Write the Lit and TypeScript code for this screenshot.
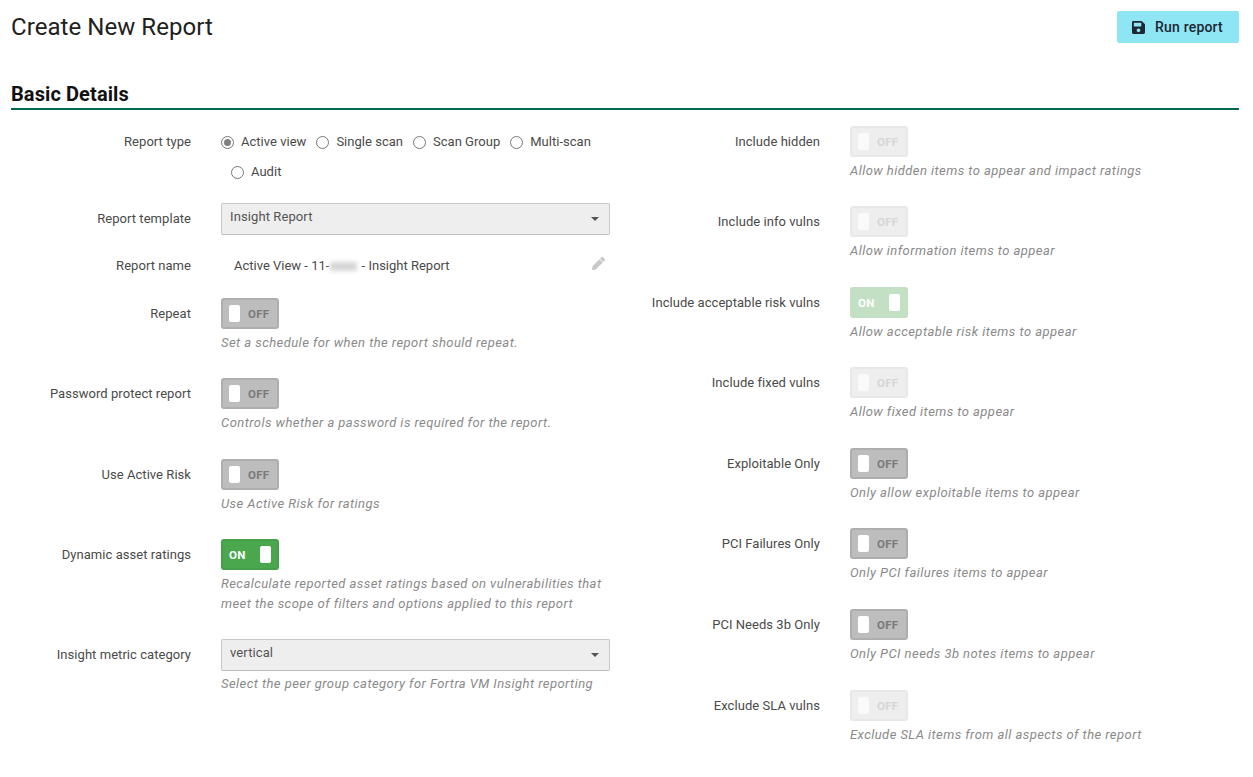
import { LitElement, html, css } from "lit";
import { customElement } from "lit/decorators.js";

type Row = { label: string; on?: boolean; disabled?: boolean; hint: string };

const SAVE = "M433.941 129.941l-83.882-83.882A48 48 0 0 0 316.118 32H48C21.49 32 0 53.49 0 80v352c0 26.51 21.49 48 48 48h352c26.51 0 48-21.49 48-48V163.882a48 48 0 0 0-14.059-33.941zM224 416c-35.346 0-64-28.654-64-64 0-35.346 28.654-64 64-64s64 28.654 64 64c0 35.346-28.654 64-64 64zm96-304.52V212c0 6.627-5.373 12-12 12H76c-6.627 0-12-5.373-12-12V108c0-6.627 5.373-12 12-12h228.52c3.183 0 6.235 1.264 8.485 3.515l3.48 3.48A11.996 11.996 0 0 1 320 111.48z";
const PENCIL = "M497.9 142.1l-46.1 46.1c-4.7 4.7-12.3 4.7-17 0l-111-111c-4.7-4.7-4.7-12.3 0-17l46.1-46.1c18.7-18.7 49.1-18.7 67.9 0l60.1 60.1c18.8 18.7 18.8 49.1 0 67.9zM284.2 99.8L21.6 362.4.4 483.9c-2.9 16.4 11.4 30.6 27.8 27.8l121.5-21.3 262.6-262.6c4.7-4.7 4.7-12.3 0-17l-111-111c-4.8-4.7-12.4-4.7-17.1 0z";

const LEFT: Row[] = [
  { label: "Repeat", hint: "Set a schedule for when the report should repeat." },
  { label: "Password protect report", hint: "Controls whether a password is required for the report." },
  { label: "Use Active Risk", hint: "Use Active Risk for ratings" },
  { label: "Dynamic asset ratings", on: true, hint: "Recalculate reported asset ratings based on vulnerabilities that meet the scope of filters and options applied to this report" },
];
const RIGHT: Row[] = [
  { label: "Include hidden", disabled: true, hint: "Allow hidden items to appear and impact ratings" },
  { label: "Include info vulns", disabled: true, hint: "Allow information items to appear" },
  { label: "Include acceptable risk vulns", on: true, disabled: true, hint: "Allow acceptable risk items to appear" },
  { label: "Include fixed vulns", disabled: true, hint: "Allow fixed items to appear" },
  { label: "Exploitable Only", hint: "Only allow exploitable items to appear" },
  { label: "PCI Failures Only", hint: "Only PCI failures items to appear" },
  { label: "PCI Needs 3b Only", hint: "Only PCI needs 3b notes items to appear" },
  { label: "Exclude SLA vulns", disabled: true, hint: "Exclude SLA items from all aspects of the report" },
];
const RADIOS = ["Active view", "Single scan", "Scan Group", "Multi-scan", "Audit"];

@customElement("app-root")
export class AppRoot extends LitElement {
  static styles = css`
    :host { display: block; font-family: Roboto, "Liberation Sans", sans-serif; color: #333; font-size: 13px; }
    .page { padding: 11px 14px 0 11px; height: 766px; box-sizing: border-box; overflow: hidden; }
    .top { display: flex; justify-content: space-between; align-items: flex-start; height: 71px; }
    h1 { margin: 0; font-size: 24px; font-weight: 400; line-height: 32px; color: #212121; letter-spacing: 0.06px; }
    .run { display: flex; align-items: center; gap: 10px; height: 32px; width: 122px; box-sizing: border-box; padding: 0 0 0 15px; border: 0; border-radius: 2px; background: #8ee5f3; color: #1d2733; font: 500 14px Roboto, sans-serif; letter-spacing: 0.2px; }
    .run svg { width: 13px; height: 15px; fill: #1d2733; }
    h2 { margin: 0; font-size: 20px; font-weight: 700; line-height: 24px; color: #111; padding-bottom: 2px; border-bottom: 2px solid #00694f; height: 24px; letter-spacing: 0.1px; }
    .cols { display: grid; grid-template-columns: 599px 599px; column-gap: 30px; padding-top: 15.6px; }
    .field { display: grid; grid-template-columns: 180px 389px; column-gap: 30px; }
    .label { text-align: right; line-height: 31px; color: #4a4a4a; letter-spacing: 0.05px; }
    .toggle-row { margin-bottom: 25.97px; }
    .hint { margin: 4px 0 0; font-style: italic; color: #8a8a8a; line-height: 19.6px; letter-spacing: 0.44px; }
    .hint.tight { margin-top: 3px; }
    .toggle { display: flex; align-items: center; position: relative; width: 58px; height: 31px; box-sizing: border-box; border-radius: 3px; border: 2px solid #aeaeae; background: #bdbdbd; }
    .toggle .thumb { position: absolute; left: 6px; top: 5px; width: 11px; height: 17px; background: #fff; border-radius: 2px; }
    .toggle .txt { position: absolute; left: 25px; top: 0; line-height: 28px; font-size: 11.5px; font-weight: 700; color: #7a7a7a; letter-spacing: 0.3px; }
    .toggle.on { background: #4aa74e; border-color: #46a04a; }
    .toggle.on .thumb { left: 37px; }
    .toggle.on .txt { left: 6px; color: #fff; }
    .toggle.off-disabled { background: #eeeeee; border-color: #e8e8e8; }
    .toggle.off-disabled .txt { color: #d6d6d6; }
    .toggle.off-disabled .thumb { background: #fafafa; }
    .toggle.on-disabled { background: #c3e0c4; border-color: #c3e0c4; }
    .toggle.on-disabled .thumb { left: 37px; }
    .toggle.on-disabled .txt { left: 6px; color: #fff; }
    .radio-field { margin-bottom: 15.95px; }
    .radios { display: flex; flex-wrap: wrap; padding-top: 1px; }
    .radio { display: flex; align-items: center; height: 30px; margin-left: 10px; gap: 7px; color: #4a4a4a; letter-spacing: 0.02px; }
    .radio:first-child { margin-left: 0; }
    .dot { width: 13px; height: 13px; box-sizing: border-box; border-radius: 50%; border: 1px solid #777; background: #fff; display: flex; align-items: center; justify-content: center; margin-top: 2px; }
    .dot.sel::after { content: ""; width: 7px; height: 7px; border-radius: 50%; background: #808080; }
    .select { display: flex; justify-content: space-between; height: 32px; box-sizing: border-box; padding: 0 8px; background: #eeeeee; border: 1px solid #c8c8c8; border-bottom-color: #bdbdbd; border-radius: 2px; color: #555; line-height: 25px; letter-spacing: 0.1px; position: relative; }
    .select::after { content: ""; position: absolute; right: 10px; top: 13px; border: 4px solid transparent; border-top-color: #555; border-bottom: 0; }
    .select-row { margin-bottom: 15px; }
    .name-row { margin-bottom: 17px; }
    .name { display: flex; justify-content: space-between; padding: 0 5px 0 13px; line-height: 31px; color: #4a4a4a; align-items: center; }
    .name svg { width: 13px; height: 13px; fill: #c8c8c8; margin-top: -4px; }
    .blur { display: inline-block; width: 27px; height: 9px; margin: 0 1px; background: #d6d6d6; filter: blur(2px); vertical-align: -1px; }
  `;

  private toggle(r: Row) {
    const cls = r.disabled ? (r.on ? "on-disabled" : "off-disabled") : r.on ? "on" : "";
    return html`<div class="toggle ${cls}"><span class="thumb"></span><span class="txt">${r.on ? "ON" : "OFF"}</span></div>`;
  }

  private row(r: Row) {
    return html`<div class="field toggle-row">
      <div class="label">${r.label}</div>
      <div>${this.toggle(r)}<p class="hint">${r.hint}</p></div>
    </div>`;
  }

  render() {
    return html`<div class="page">
      <div class="top">
        <h1>Create New Report</h1>
        <button class="run"><svg viewBox="0 0 448 512"><path d="${SAVE}"></path></svg>Run report</button>
      </div>
      <h2>Basic Details</h2>
      <div class="cols">
        <div>
          <div class="field radio-field">
            <div class="label">Report type</div>
            <div class="radios">
              ${RADIOS.map((r, i) => html`<div class="radio"><span class="dot ${i === 0 ? "sel" : ""}"></span>${r}</div>`)}
            </div>
          </div>
          <div class="field select-row">
            <div class="label">Report template</div>
            <div class="select">Insight Report</div>
          </div>
          <div class="field name-row">
            <div class="label">Report name</div>
            <div class="name"><span>Active View - 11-<span class="blur"></span> - Insight Report</span><svg viewBox="0 0 512 512"><path d="${PENCIL}"></path></svg></div>
          </div>
          ${LEFT.map((r) => this.row(r))}
          <div class="field">
            <div class="label">Insight metric category</div>
            <div><div class="select">vertical</div><p class="hint tight">Select the peer group category for Fortra VM Insight reporting</p></div>
          </div>
        </div>
        <div>${RIGHT.map((r) => this.row(r))}</div>
      </div>
    </div>`;
  }
}
